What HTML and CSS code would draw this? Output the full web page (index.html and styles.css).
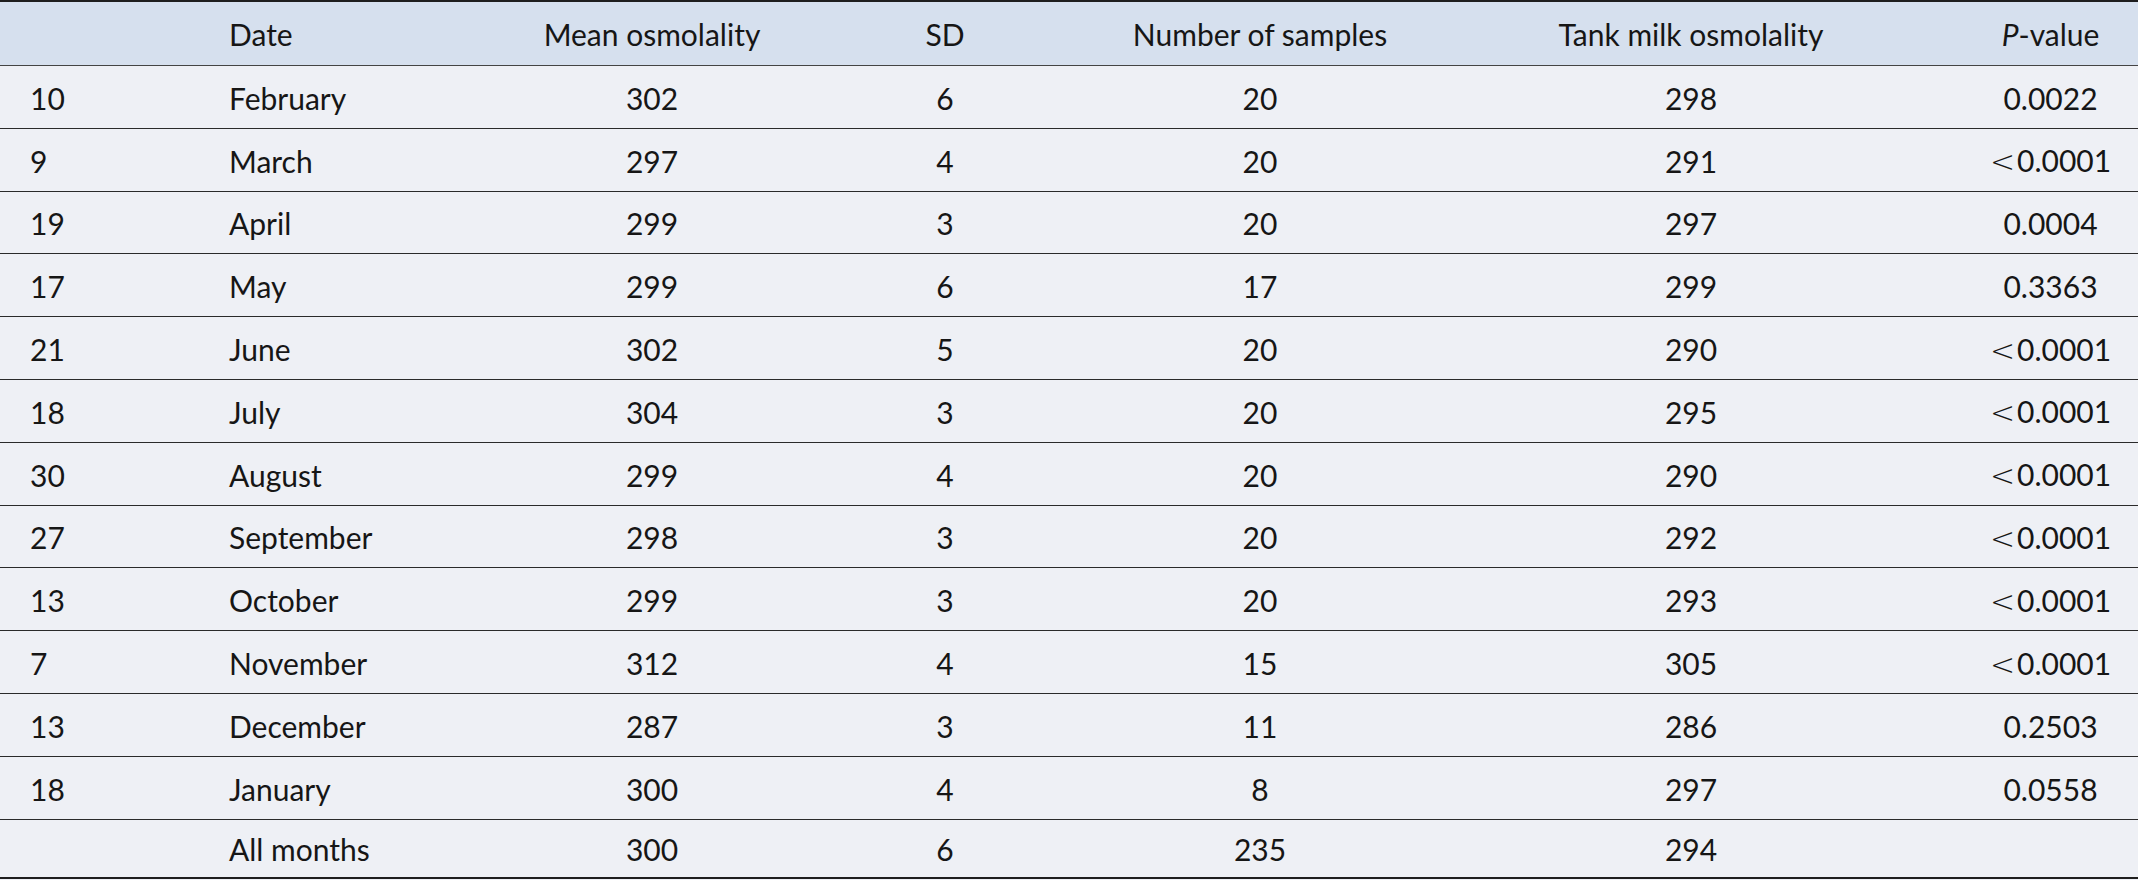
FILE: index.html
```html
<!DOCTYPE html>
<html lang="en">
<head>
<meta charset="utf-8">
<title>Osmolality table</title>
<link rel="stylesheet" href="styles.css">
</head>
<body>
<table class="data">
  <colgroup>
    <col class="c1"><col class="c2"><col class="c3"><col class="c4"><col class="c5"><col class="c6"><col class="c7">
  </colgroup>
  <thead>
    <tr>
      <th class="left"></th>
      <th class="left">Date</th>
      <th>Mean osmolality</th>
      <th>SD</th>
      <th>Number of samples</th>
      <th>Tank milk osmolality</th>
      <th><i>P</i>-value</th>
    </tr>
  </thead>
  <tbody>
    <tr><td class="left">10</td><td class="left">February</td><td>302</td><td>6</td><td>20</td><td>298</td><td>0.0022</td></tr>
    <tr><td class="left">9</td><td class="left">March</td><td>297</td><td>4</td><td>20</td><td>291</td><td><span class="lt">&lt;</span>0.0001</td></tr>
    <tr><td class="left">19</td><td class="left">April</td><td>299</td><td>3</td><td>20</td><td>297</td><td>0.0004</td></tr>
    <tr><td class="left">17</td><td class="left">May</td><td>299</td><td>6</td><td>17</td><td>299</td><td>0.3363</td></tr>
    <tr><td class="left">21</td><td class="left">June</td><td>302</td><td>5</td><td>20</td><td>290</td><td><span class="lt">&lt;</span>0.0001</td></tr>
    <tr><td class="left">18</td><td class="left">July</td><td>304</td><td>3</td><td>20</td><td>295</td><td><span class="lt">&lt;</span>0.0001</td></tr>
    <tr><td class="left">30</td><td class="left">August</td><td>299</td><td>4</td><td>20</td><td>290</td><td><span class="lt">&lt;</span>0.0001</td></tr>
    <tr><td class="left">27</td><td class="left">September</td><td>298</td><td>3</td><td>20</td><td>292</td><td><span class="lt">&lt;</span>0.0001</td></tr>
    <tr><td class="left">13</td><td class="left">October</td><td>299</td><td>3</td><td>20</td><td>293</td><td><span class="lt">&lt;</span>0.0001</td></tr>
    <tr><td class="left">7</td><td class="left">November</td><td>312</td><td>4</td><td>15</td><td>305</td><td><span class="lt">&lt;</span>0.0001</td></tr>
    <tr><td class="left">13</td><td class="left">December</td><td>287</td><td>3</td><td>11</td><td>286</td><td>0.2503</td></tr>
    <tr><td class="left">18</td><td class="left">January</td><td>300</td><td>4</td><td>8</td><td>297</td><td>0.0558</td></tr>
    <tr class="total"><td class="left"></td><td class="left">All months</td><td>300</td><td>6</td><td>235</td><td>294</td><td></td></tr>
  </tbody>
</table>
</body>
</html>
```

FILE: styles.css
```css
html, body {
  margin: 0;
  padding: 0;
  background: #eef0f5;
}

.data {
  width: 2138px;
  table-layout: fixed;
  border-collapse: collapse;
  font-family: Lato, "Liberation Sans", sans-serif;
  font-size: 30px;
  color: #161616;
  background: #eef0f5;
  border-top: 2px solid #1e1e1e;
  border-bottom: 2px solid #1e1e1e;
}

.c1 { width: 199px; }
.c2 { width: 316px; }
.c3 { width: 274px; }
.c4 { width: 312px; }
.c5 { width: 318px; }
.c6 { width: 544px; }
.c7 { width: 175px; }

.data th,
.data td {
  padding: 0;
  text-align: center;
  vertical-align: middle;
  white-space: nowrap;
}

.data th {
  font-weight: normal;
  background: #d6e0ee;
  height: 63px;
  border-bottom: 1px solid #444;
}

.data td {
  height: 59.8px;
  padding-top: 2px;
  border-bottom: 1px solid #2a2a2a;
}

.data .left {
  text-align: left;
  padding-left: 30px;
}

.data .total td {
  border-top: 1px solid #666;
  border-bottom: none;
  height: 55px;
}

.lt {
  font-family: "DejaVu Sans", sans-serif;
  font-weight: 200;
  margin-right: 2px;
}
```
